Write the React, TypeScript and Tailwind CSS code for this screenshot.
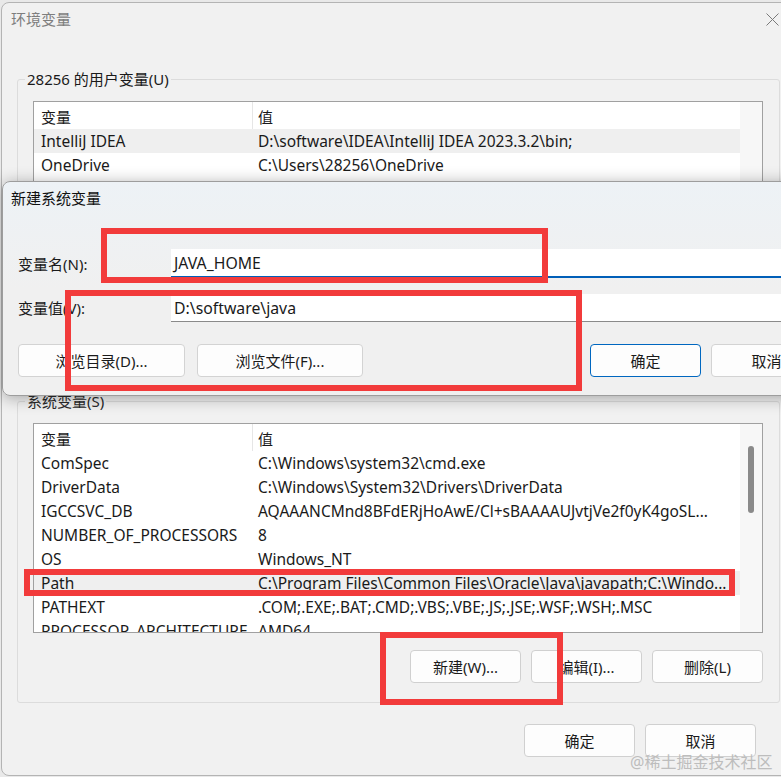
import React from "react";

type Row = { name: string; value: string; selected?: boolean };

const userRows: Row[] = [
  { name: "IntelliJ IDEA", value: "D:\\software\\IDEA\\IntelliJ IDEA 2023.3.2\\bin;", selected: true },
  { name: "OneDrive", value: "C:\\Users\\28256\\OneDrive" },
  { name: "OneDriveConsumer", value: "C:\\Users\\28256\\OneDrive" },
  { name: "Path", value: "C:\\Users\\28256\\AppData\\Local\\Microsoft\\WindowsApps;" },
  { name: "TEMP", value: "C:\\Users\\28256\\AppData\\Local\\Temp" },
  { name: "TMP", value: "C:\\Users\\28256\\AppData\\Local\\Temp" },
];

const systemRows: Row[] = [
  { name: "ComSpec", value: "C:\\Windows\\system32\\cmd.exe" },
  { name: "DriverData", value: "C:\\Windows\\System32\\Drivers\\DriverData" },
  { name: "IGCCSVC_DB", value: "AQAAANCMnd8BFdERjHoAwE/Cl+sBAAAAUJvtjVe2f0yK4goSL..." },
  { name: "NUMBER_OF_PROCESSORS", value: "8" },
  { name: "OS", value: "Windows_NT" },
  { name: "Path", value: "C:\\Program Files\\Common Files\\Oracle\\Java\\javapath;C:\\Windo...", selected: true },
  { name: "PATHEXT", value: ".COM;.EXE;.BAT;.CMD;.VBS;.VBE;.JS;.JSE;.WSF;.WSH;.MSC" },
  { name: "PROCESSOR_ARCHITECTURE", value: "AMD64" },
  { name: "PROCESSOR_IDENTIFIER", value: "Intel64 Family 6 Model 140 Stepping 1, GenuineIntel" },
];

function VarList({ rows, thumb }: { rows: Row[]; thumb?: boolean }) {
  return (
    <div className="flex h-[210px] w-[730px] overflow-hidden border border-[#a0a0a0] bg-white">
      <div className="min-w-0 flex-1">
        {/* header */}
        <div className="flex h-[27px]">
          <div className="flex w-[219px] shrink-0 items-center border-r border-[#e6e6e6] pl-[7px] pt-[2px]">变量</div>
          <div className="flex items-center pl-[5px] pt-[2px]">值</div>
        </div>
        {rows.map((r) => (
          <div
            key={r.name}
            className={`flex h-[24px] items-center whitespace-nowrap text-[15.5px] ${r.selected ? "bg-[#efefef]" : ""}`}
          >
            <div className="w-[219px] shrink-0 overflow-hidden pl-[7px]">{r.name}</div>
            <div className="pl-[5px]">{r.value}</div>
          </div>
        ))}
      </div>
      <div className="flex w-[22px] shrink-0 justify-center bg-[#f7f7f7]">
        {thumb && <div className="mt-[22px] h-[67px] w-[6px] rounded-full bg-[#8a8a8a]" />}
      </div>
    </div>
  );
}

function Btn({ children, className = "" }: { children: React.ReactNode; className?: string }) {
  return (
    <button
      className={`flex h-[33px] shrink-0 items-center justify-center rounded-[4px] border bg-[#fdfdfd] text-[15px] text-[#1b1b1b] ${className}`}
    >
      {children}
    </button>
  );
}

export default function App() {
  return (
    <div className="relative h-[777px] w-[781px] overflow-hidden bg-[#e9e9e9] font-['Noto_Sans','Noto_Sans_CJK_SC',sans-serif] text-[15px] leading-[20px] text-[#1a1a1a]">
      {/* 环境变量 window */}
      <div className="ml-[1px] mt-[2px] flex h-[774px] w-[795px] flex-col rounded-lg border border-[#b4b4b4] bg-[#f1f1f1]">
        <div className="flex h-[32px] items-center justify-between pl-[9px]">
          <span className="text-[#7e7e7e]">环境变量</span>
          <div className="flex h-full w-[46px] items-center justify-center">
            <svg width="13" height="13" viewBox="0 0 13 13" fill="none" stroke="#7a7a7a" strokeWidth="1">
              <path d="M0.5 0.5L12.5 12.5M12.5 0.5L0.5 12.5" />
            </svg>
          </div>
        </div>

        <fieldset className="mx-[15px] mt-[34px] h-[311px] rounded-[3px] border border-[#dcdcdc] px-[15px] pt-[12px]">
          <legend className="-ml-[8px] px-[2px] leading-[20px]">28256 的用户变量(U)</legend>
          <VarList rows={userRows} />
          <div className="mt-[17px] flex justify-end gap-[11px]">
            <Btn className="w-[111px] border-[#d0d0d0]">新建(N)...</Btn>
            <Btn className="w-[111px] border-[#d0d0d0]">编辑(E)...</Btn>
            <Btn className="w-[111px] border-[#d0d0d0]">删除(D)</Btn>
          </div>
        </fieldset>

        <fieldset className="mx-[15px] mt-[11px] h-[312px] rounded-[3px] border border-[#dcdcdc] px-[15px] pt-[12px]">
          <legend className="-ml-[8px] px-[2px] leading-[20px] text-[#2a2a2a]">系统变量(S)</legend>
          <VarList rows={systemRows} thumb />
          <div className="mt-[17px] flex justify-end gap-[10px] pr-[1px]">
            <Btn className="w-[111px] border-[#d0d0d0]">新建(W)...</Btn>
            <Btn className="w-[111px] border-[#d0d0d0]">编辑(I)...</Btn>
            <Btn className="w-[111px] border-[#d0d0d0]">删除(L)</Btn>
          </div>
        </fieldset>

        <div className="mt-[21px] flex justify-end gap-[10px] pr-[39px]">
          <Btn className="w-[111px] border-[#d0d0d0]">确定</Btn>
          <Btn className="w-[111px] border-[#d0d0d0]">取消</Btn>
        </div>
      </div>

      {/* 新建系统变量 dialog */}
      <div className="absolute left-[2px] top-[181px] h-[215px] w-[840px] rounded-lg border border-[#9d9d9d] bg-gradient-to-b from-[#edf2f6] via-[#f0f0f0] to-[#f0f0f0] shadow-[0_2px_16px_rgba(0,0,0,0.32)]">
        <div className="mt-[6px] pl-[8px] leading-[20px] text-[#111]">新建系统变量</div>
        <div className="pl-[15px]">
          <div className="mt-[41px] flex items-center">
            <label className="w-[153px] shrink-0 pt-[1px]">变量名(N):</label>
            <div className="flex h-[29px] flex-1 items-center border-b-2 border-[#005fb8] bg-white pl-[3px] pt-[1px] text-[15.8px]">
              JAVA_HOME
            </div>
          </div>
          <div className="mt-[16px] flex items-center">
            <label className="w-[153px] shrink-0">变量值(V):</label>
            <div className="flex h-[28px] flex-1 items-center border-b border-[#8a8a8a] bg-white pl-[3px] text-[15.8px]">
              D:\software\java
            </div>
          </div>
          <div className="mt-[22px] flex">
            <Btn className="w-[167px] border-[#d3d3d3]">浏览目录(D)...</Btn>
            <Btn className="ml-[12px] w-[166px] border-[#d3d3d3]">浏览文件(F)...</Btn>
            <Btn className="ml-[227px] w-[111px] border-[#0067c0]">确定</Btn>
            <Btn className="ml-[10px] w-[111px] border-[#d3d3d3]">取消</Btn>
          </div>
        </div>
      </div>

      {/* red annotation boxes */}
      <div className="pointer-events-none absolute left-[101px] top-[228px] h-[55px] w-[447px] border-[6px] border-[#f23b3b]" />
      <div className="pointer-events-none absolute left-[65px] top-[290px] h-[101px] w-[517px] border-[6px] border-[#f23b3b]" />
      <div className="pointer-events-none absolute left-[24px] top-[569px] h-[27px] w-[711px] border-[6px] border-[#f23b3b]" />
      <div className="pointer-events-none absolute left-[380px] top-[632px] h-[73px] w-[183px] border-[6px] border-[#f23b3b]" />

      {/* watermark */}
      <div className="pointer-events-none absolute left-[630px] top-[752px] text-[16px] text-[#bdbdbd]">@稀土掘金技术社区</div>
    </div>
  );
}
